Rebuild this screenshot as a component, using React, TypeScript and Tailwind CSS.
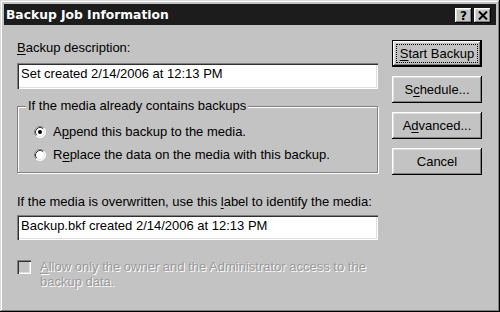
import React from "react";

const font = { fontFamily: '"Liberation Sans", Arial, sans-serif' };

function Radio({ checked }: { checked?: boolean }) {
  return (
    <svg width="12" height="12" viewBox="0 0 12 12" className="shrink-0">
      <circle cx="6" cy="6" r="5.5" fill="#fff" />
      <path d="M2.11 9.89 A5.5 5.5 0 0 1 9.89 2.11" stroke="#808080" strokeWidth="1" fill="none" />
      <path d="M2.82 9.18 A4.5 4.5 0 0 1 9.18 2.82" stroke="#303030" strokeWidth="1" fill="none" />
      <path d="M9.89 2.11 A5.5 5.5 0 0 1 2.11 9.89" stroke="#ffffff" strokeWidth="1" fill="none" />
      <path d="M9.18 2.82 A4.5 4.5 0 0 1 2.82 9.18" stroke="#e0e0e0" strokeWidth="1" fill="none" />
      {checked && <circle cx="6" cy="6" r="2" fill="#000" />}
    </svg>
  );
}

function Btn({ children, def }: { children: React.ReactNode; def?: boolean }) {
  if (def) {
    return (
      <div className="h-[27px] w-[90px] border border-black">
        <div className="h-full w-full p-[3px] bg-[#c3c3c3] shadow-[inset_-1px_-1px_#000,inset_1px_1px_#fff,inset_-2px_-2px_#808080,inset_2px_2px_#dfdfdf]">
          <div className="h-full w-full border border-dotted border-black flex items-center justify-center text-[13px] leading-[16px] text-black">
            {children}
          </div>
        </div>
      </div>
    );
  }
  return (
    <div className="h-[27px] w-[90px] bg-[#c3c3c3] flex items-center justify-center text-[13px] leading-[16px] text-black shadow-[inset_-1px_-1px_#000,inset_1px_1px_#fff,inset_-2px_-2px_#808080,inset_2px_2px_#dfdfdf]">
      {children}
    </div>
  );
}

const U = ({ c }: { c: string }) => <span className="underline underline-offset-[2px]">{c}</span>;

export default function App() {
  return (
    <div
      style={font}
      className="w-[500px] h-[312px] bg-[#c3c3c3] p-[4px] flex flex-col shadow-[inset_-1px_-1px_#000,inset_1px_1px_#dcdcdc,inset_-2px_-2px_#808080,inset_2px_2px_#fff]"
    >
      {/* Title bar */}
      <div className="h-[21px] bg-[#1c1c1c] flex items-center justify-between pl-[2px] pr-[5px] shrink-0">
        <span
          className="text-white font-bold text-[12.3px] leading-[16px]"
          style={{ fontFamily: '"DejaVu Sans", Verdana, sans-serif' }}
        >
          Backup Job Information
        </span>
        <div className="flex gap-[2px] pt-[2px]">
          <div className="w-[17px] h-[15px] bg-[#c3c3c3] flex items-center justify-center shadow-[inset_-1px_-1px_#000,inset_1px_1px_#fff,inset_-2px_-2px_#808080,inset_2px_2px_#dfdfdf]">
            <span
              className="text-black font-bold text-[12px] leading-[12px]"
              style={{ fontFamily: '"DejaVu Sans", Verdana, sans-serif' }}
            >
              ?
            </span>
          </div>
          <div className="w-[17px] h-[15px] bg-[#c3c3c3] flex items-center justify-center shadow-[inset_-1px_-1px_#000,inset_1px_1px_#fff,inset_-2px_-2px_#808080,inset_2px_2px_#dfdfdf]">
            <svg width="10" height="9" viewBox="0 0 10 9">
              <path d="M1 0.5 L9 8.5 M9 0.5 L1 8.5" stroke="#000" strokeWidth="2" />
            </svg>
          </div>
        </div>
      </div>

      {/* Body */}
      <div className="flex flex-row text-[13px] leading-[16px] text-black">
        {/* Left column */}
        <div className="ml-[13px] w-[361px] flex flex-col">
          <div className="mt-[15px] h-[16px]">
            <U c="B" />ackup description:
          </div>
          <div className="mt-[7px] h-[26px] bg-white pl-[4px] pt-[3px] shadow-[inset_1px_1px_#808080,inset_2px_2px_#303030,inset_-1px_-1px_#fff,inset_-2px_-2px_#dfdfdf]">
            Set created 2/14/2006 at 12:13 PM
          </div>

          {/* Group box */}
          <div className="relative mt-[17px] h-[67px] border border-[#808080] shadow-[inset_1px_1px_#fff,1px_1px_#fff] pt-[15px] pl-[16px] flex flex-col gap-[3px]">
            <div className="absolute left-[8px] top-[-9px] bg-[#c3c3c3] px-[2px] leading-[16px]">
              If the media already contains backups
            </div>
            <div className="h-[20px] flex items-center gap-[7px]">
              <Radio checked />
              <span>
                A<U c="p" />pend this backup to the media.
              </span>
            </div>
            <div className="h-[20px] flex items-center gap-[7px]">
              <Radio />
              <span>
                R<U c="e" />place the data on the media with this backup.
              </span>
            </div>
          </div>

          <div className="mt-[21px] h-[16px]">
            If the media is overwritten, use this <U c="l" />abel to identify the media:
          </div>
          <div className="mt-[5px] h-[25px] bg-white pl-[4px] pt-[3px] shadow-[inset_1px_1px_#808080,inset_2px_2px_#303030,inset_-1px_-1px_#fff,inset_-2px_-2px_#dfdfdf]">
            Backup.bkf created 2/14/2006 at 12:13 PM
          </div>

          <div className="mt-[19px] flex items-start gap-[9px]">
            <div className="mt-[1px] w-[14px] h-[14px] shrink-0 bg-[#c3c3c3] shadow-[inset_1px_1px_#808080,inset_2px_2px_#303030,inset_-1px_-1px_#fff,inset_-2px_-2px_#dfdfdf]" />
            <div className="text-[#9a9a9a] leading-[15px] [text-shadow:1px_1px_0_#fff]">
              <U c="A" />llow only the owner and the Administrator access to the
              <br />
              backup data.
            </div>
          </div>
        </div>

        {/* Right column */}
        <div className="ml-[14px] mt-[15px] flex flex-col gap-[9px]">
          <Btn def>
            <span>
              <U c="S" />tart Backup
            </span>
          </Btn>
          <Btn>
            <span>
              S<U c="c" />hedule...
            </span>
          </Btn>
          <Btn>
            <span>
              A<U c="d" />vanced...
            </span>
          </Btn>
          <Btn>Cancel</Btn>
        </div>
      </div>
    </div>
  );
}
